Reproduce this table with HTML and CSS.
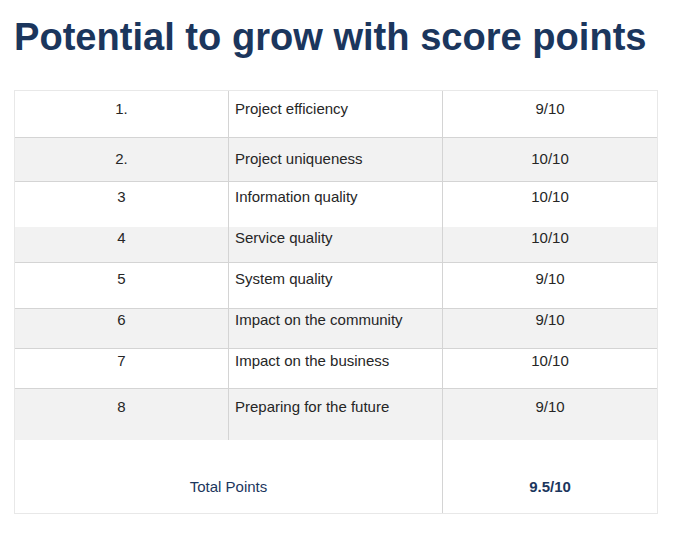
FILE: index.html
```html
<!DOCTYPE html>
<html lang="en">
<head>
<meta charset="utf-8">
<title>Potential to grow with score points</title>
<link rel="stylesheet" href="styles.css">
</head>
<body>
<main class="page">
  <h1 class="title">Potential to grow with score points</h1>
  <div class="table">
    <div class="row r1"><div class="cell num">1.</div><div class="cell name">Project efficiency</div><div class="cell score">9/10</div></div>
    <div class="row r2 shade"><div class="cell num">2.</div><div class="cell name">Project uniqueness</div><div class="cell score">10/10</div></div>
    <div class="row r3 noline"><div class="cell num">3</div><div class="cell name">Information quality</div><div class="cell score">10/10</div></div>
    <div class="row r4 shade"><div class="cell num">4</div><div class="cell name">Service quality</div><div class="cell score">10/10</div></div>
    <div class="row r5"><div class="cell num">5</div><div class="cell name">System quality</div><div class="cell score">9/10</div></div>
    <div class="row r6 shade"><div class="cell num">6</div><div class="cell name">Impact on the community</div><div class="cell score">9/10</div></div>
    <div class="row r7"><div class="cell num">7</div><div class="cell name">Impact on the business</div><div class="cell score">10/10</div></div>
    <div class="row r8 shade noline"><div class="cell num">8</div><div class="cell name">Preparing for the future</div><div class="cell score">9/10</div></div>
    <div class="row total noline"><div class="cell label">Total Points</div><div class="cell score sum">9.5/10</div></div>
  </div>
</main>
</body>
</html>
```

FILE: styles.css
```css
* { box-sizing: border-box; }
html, body { margin: 0; padding: 0; background: #ffffff; }
.page {
  padding: 14px 0 0 14px;
  font-family: "Liberation Sans", Arial, sans-serif;
}
.title {
  margin: 0 0 30px 0;
  font-size: 38.1px;
  line-height: 46px;
  font-weight: 700;
  color: #1b365d;
}
.table {
  width: 644px;
  border: 1px solid #e8e8e8;
  font-size: 15px;
  line-height: 17px;
  color: #262626;
}
.row {
  display: grid;
  grid-template-columns: 214px 214px 214px;
  border-bottom: 1px solid #d4d4d4;
}
.row.noline { border-bottom: none; }
.row.shade { background: #f2f2f2; }
.cell { border-right: 1px solid #d4d4d4; }
.cell:last-child { border-right: none; }
.num, .score { text-align: center; }
.name { padding-left: 6px; }

.r1 { height: 47px; }
.r1 .cell { padding-top: 9px; }
.r2 { height: 44px; }
.r2 .cell { padding-top: 12px; }
.r3 { height: 45px; }
.r3 .cell { padding-top: 6px; }
.r4 { height: 36px; }
.r4 .cell { padding-top: 2px; }
.r5 { height: 46px; }
.r5 .cell { padding-top: 7px; }
.r6 { height: 40px; }
.r6 .cell { padding-top: 2px; }
.r7 { height: 40px; }
.r7 .cell { padding-top: 3px; }
.r8 { height: 51px; }
.r8 .cell { padding-top: 9px; }

.total {
  height: 73px;
  grid-template-columns: 428px 214px;
}
.total .cell { padding-top: 38px; color: #1b365d; }
.label { text-align: center; }
.sum { font-weight: 700; }
```
